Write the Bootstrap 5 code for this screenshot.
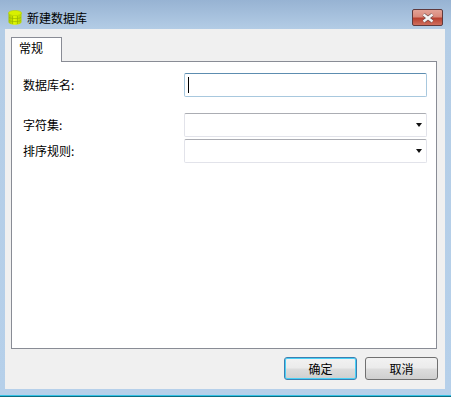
<!DOCTYPE html>
<html lang="zh-CN">
<head>
    <meta charset="UTF-8">
    <meta name="viewport" content="width=device-width, initial-scale=1">
    <title>新建数据库</title>
    <link rel="stylesheet" href="https://cdn.jsdelivr.net/npm/bootstrap@5.3.0/dist/css/bootstrap.min.css">
    <style>
        html, body {
            background-color: #ffffff;
            overflow: hidden;
        }

        body {
            font-family: "Noto Sans CJK SC", "Liberation Sans", sans-serif;
            font-size: 12px;
            line-height: 16px;
            color: #000;
        }

        .win-frame {
            width: 451px;
            height: 397px;
            padding: 0 6px 6px 5px;
            background: linear-gradient(to bottom, #97b3d3 0, #b4cde6 30px, #b6d0ea 100%);
            border-bottom: 1px solid #0e6b80;
            box-shadow: inset 0 -1px 0 #35c3e6;
        }

        .win-title {
            height: 29px;
        }

        .title-wrap {
            height: 35px;
            padding-left: 3px;
        }

        .title-text {
            margin-left: 5px;
        }

        .close-btn {
            width: 31px;
            height: 17px;
            margin-top: 9px;
            margin-right: 2px;
            border: 1px solid #5f3a3d;
            border-radius: 2px;
            background: linear-gradient(to bottom, #e3a296 0, #d98a7c 45%, #b8402f 55%, #cf6f5e 100%);
        }

        .win-client {
            height: 360px;
            background-color: #f0f0f0;
            padding: 8px 8px 9px 6px;
        }

        .tab-head {
            width: 51px;
            height: 25px;
            margin-bottom: -1px;
            padding: 2px 0 0 7px;
            background-color: #fff;
            border: 1px solid #898c95;
            border-bottom: 0;
            position: relative;
            z-index: 1;
        }

        .tab-body {
            height: 288px;
            background-color: #fff;
            border: 1px solid #898c95;
            padding: 11px 9px 0 11px;
        }

        .field-label {
            width: 161px;
            flex: none;
        }

        .field-row {
            height: 24px;
            margin-bottom: 2px;
        }

        .field-row-first {
            margin-bottom: 16px;
        }

        .text-box {
            width: 243px;
            height: 24px;
            flex: none;
            border: 1px solid #a8c8de;
            border-top-color: #5d8db0;
            border-radius: 2px;
            padding: 3px;
        }

        .caret-bar {
            display: block;
            width: 1px;
            height: 16px;
            background-color: #000;
        }

        .combo-box {
            width: 243px;
            height: 24px;
            flex: none;
            border: 1px solid #e2e3ea;
            border-top-color: #abadb3;
            border-radius: 2px;
            padding-right: 4px;
        }

        .combo-arrow {
            width: 0;
            height: 0;
            border-left: 3.5px solid transparent;
            border-right: 3.5px solid transparent;
            border-top: 4px solid #111;
        }

        .btn-row {
            margin-top: 8px;
            margin-right: -1px;
        }

        .win-btn {
            width: 73px;
            height: 23px;
            border: 1px solid #707070;
            border-radius: 3px;
            background: linear-gradient(to bottom, #f2f2f2 0, #ebebeb 48%, #dddddd 52%, #cfcfcf 100%);
            font-size: 12px;
            line-height: 15px;
            padding: 0;
            color: #000;
        }

        .win-btn-default {
            border-color: #3c7fb1;
            box-shadow: inset 0 0 0 1px #48d0f6;
        }
    </style>
</head>
<body>

<div class="win-frame d-flex flex-column">
    <div class="win-title d-flex justify-content-between">
        <div class="title-wrap d-flex align-items-center">
            <svg width="14" height="15" viewBox="0 0 14 15">
                <defs>
                    <linearGradient id="dbBody" x1="0" x2="1" y1="0" y2="0">
                        <stop offset="0" stop-color="#a4c400"/>
                        <stop offset="0.45" stop-color="#e0f800"/>
                        <stop offset="1" stop-color="#b4d200"/>
                    </linearGradient>
                </defs>
                <path d="M0.5 3v9c0 1.5 3 2.7 6.5 2.7s6.5-1.2 6.5-2.7V3z" fill="url(#dbBody)"/>
                <ellipse cx="7" cy="3" rx="6.5" ry="2.6" fill="#d8f000" stroke="#b4d000" stroke-width="0.6"/>
                <path d="M1 7.5c2 1.4 10 1.4 12 0M1 10.5c2 1.4 10 1.4 12 0M4.5 6v8M9.5 6v8" stroke="#9ab400" stroke-width="0.7" fill="none"/>
            </svg>
            <span class="title-text">新建数据库</span>
        </div>
        <div class="close-btn d-flex align-items-center justify-content-center">
            <svg width="14" height="10" viewBox="0 0 14 10">
                <path d="M2.5 1.5l9 7M11.5 1.5l-9 7" stroke="#6e4a48" stroke-width="3.6" fill="none"/>
                <path d="M2.5 1.5l9 7M11.5 1.5l-9 7" stroke="#f4f4f4" stroke-width="2.4" fill="none"/>
            </svg>
        </div>
    </div>
    <div class="win-client d-flex flex-column">
        <div class="tab-head">常规</div>
        <div class="tab-body">
            <div class="field-row field-row-first d-flex align-items-center">
                <span class="field-label">数据库名:</span>
                <div class="text-box"><span class="caret-bar"></span></div>
            </div>
            <div class="field-row d-flex align-items-center">
                <span class="field-label">字符集:</span>
                <div class="combo-box d-flex align-items-center justify-content-end"><span class="combo-arrow"></span></div>
            </div>
            <div class="field-row d-flex align-items-center">
                <span class="field-label">排序规则:</span>
                <div class="combo-box d-flex align-items-center justify-content-end"><span class="combo-arrow"></span></div>
            </div>
        </div>
        <div class="btn-row d-flex justify-content-end gap-2">
            <button type="button" class="win-btn win-btn-default">确定</button>
            <button type="button" class="win-btn">取消</button>
        </div>
    </div>
</div>

<script src="https://cdn.jsdelivr.net/npm/bootstrap@5.3.0/dist/js/bootstrap.bundle.min.js"></script>
</body>
</html>
